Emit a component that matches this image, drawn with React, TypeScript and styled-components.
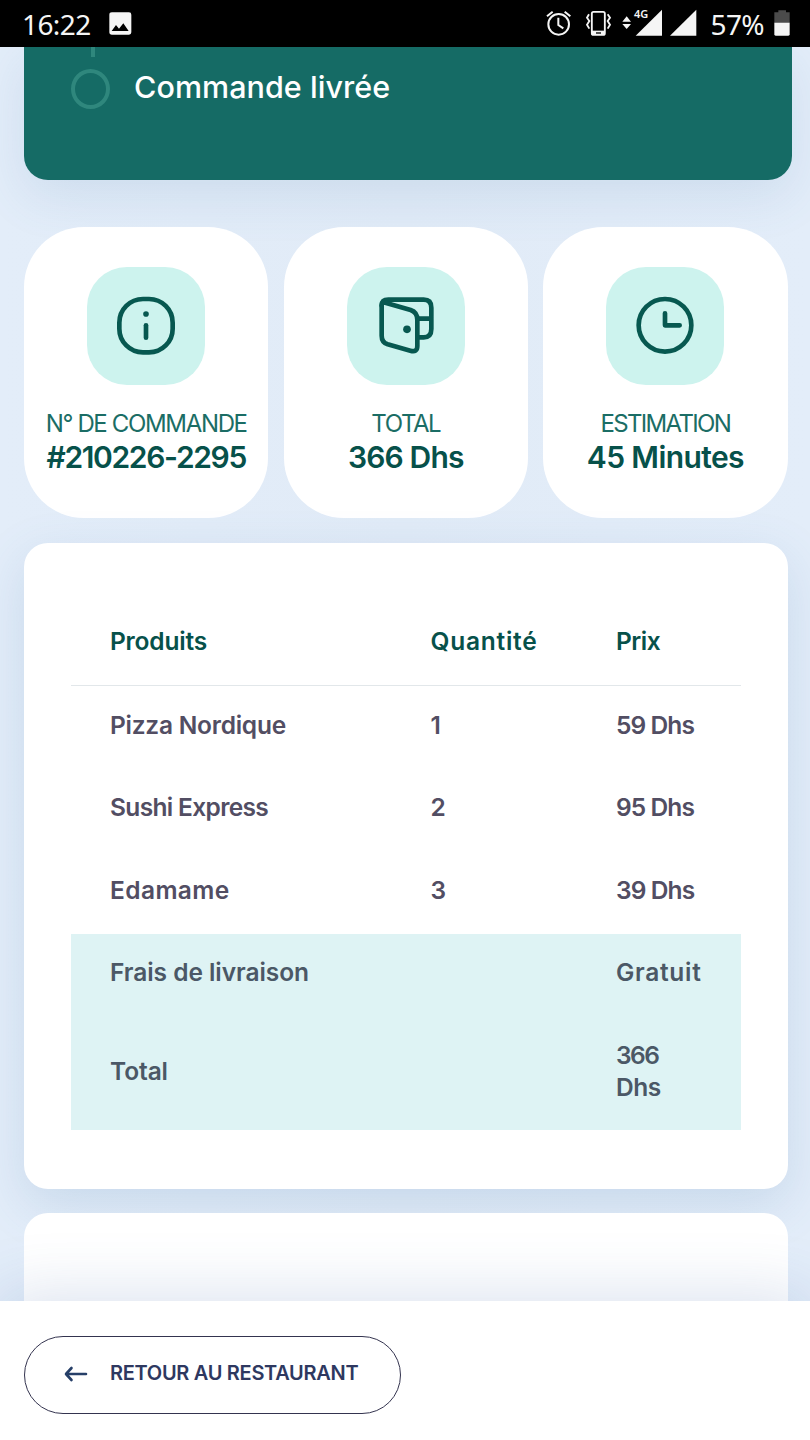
import React from 'react';
import styled, { createGlobalStyle } from 'styled-components';

const GlobalStyle = createGlobalStyle`
  *, *::before, *::after { box-sizing: border-box; }
  html, body { margin: 0; padding: 0; }
  body {
    width: 810px;
    height: 1440px;
    overflow: hidden;
    background: #e1ebf7;
    font-family: Inter, "Liberation Sans", sans-serif;
  }
`;

const Screen = styled.div`
  display: flex;
  flex-direction: column;
  width: 810px;
  height: 1440px;
  overflow: hidden;
  background: linear-gradient(90deg, #e3edf9 0%, #e1ebf7 50%, #e3edf9 100%);
`;

const StatusBar = styled.header`
  display: flex;
  flex: none;
  align-items: flex-start;
  height: 47px;
  padding: 9.33px 20px 0 22px;
  background: #000;
  color: #f5f5f5;
  font-family: "Noto Sans", sans-serif;
  position: relative;
  z-index: 2;
`;

const StatusText = styled.span<{ $spacing: number; $width: number; $gap?: number }>`
  width: ${(p) => p.$width}px;
  margin-left: ${(p) => p.$gap ?? 0}px;
  font-size: 28px;
  letter-spacing: ${(p) => p.$spacing}px;
  line-height: 30px;
  white-space: nowrap;
`;

const Glyph = styled.svg<{ $gap?: number }>`
  flex: none;
  display: block;
  height: 27.33px;
  margin-left: ${(p) => p.$gap ?? 0}px;
`;

const Spacer = styled.div`
  flex: 1;
`;

const Content = styled.main`
  display: flex;
  flex: 1;
  flex-direction: column;
  min-height: 0;
  padding: 0 18px 0 24px;
`;

const ProgressCard = styled.section`
  display: flex;
  flex: none;
  align-items: flex-start;
  height: 133px;
  padding-left: 47px;
  gap: 24px;
  border-radius: 0 0 24px 24px;
  background: #156b65;
  box-shadow: 0 16px 50px rgba(80, 125, 180, 0.14);
`;

const Track = styled.div`
  display: flex;
  flex-direction: column;
  align-items: center;
  width: 39px;
`;

const TrackLine = styled.i`
  width: 4px;
  height: 10px;
  margin: 0 0 12px 4px;
  background: #2f877d;
`;

const TrackDot = styled.i`
  width: 39px;
  height: 40px;
  border: 4px solid #2f877d;
  border-radius: 50%;
`;

const Text = styled.span<{ $spacing: number }>`
  letter-spacing: ${(p) => p.$spacing}px;
  white-space: nowrap;
`;

const StepLabel = styled.div`
  padding-top: 20px;
  color: #fff;
  font-size: 30.5px;
  font-weight: 550;
  line-height: 40px;
`;

const Stats = styled.section`
  display: grid;
  flex: none;
  grid-template-columns: repeat(3, 244.4px);
  column-gap: 15.2px;
  margin-top: 47px;
`;

const StatCard = styled.article`
  display: flex;
  flex-direction: column;
  align-items: center;
  height: 291px;
  padding-top: 40px;
  border-radius: 60px;
  background: #fff;
`;

const IconTile = styled.div`
  width: 118px;
  height: 118px;
  border-radius: 40px;
  background: #cdf3ee;

  svg {
    display: block;
    width: 100%;
    height: 100%;
    fill: none;
    stroke: #075850;
    stroke-width: 14;
    stroke-linecap: round;
    stroke-linejoin: round;
  }
`;

const StatLabel = styled.div`
  margin-top: 23px;
  color: #1b6d65;
  font-size: 24px;
  font-weight: 400;
  line-height: 32px;
`;

const StatValue = styled.div`
  margin-top: -1px;
  color: #07514a;
  font-size: 30px;
  font-weight: 600;
  line-height: 36px;
`;

const OrderCard = styled.section`
  flex: none;
  width: 764px;
  height: 646.5px;
  margin-top: 24.5px;
  padding: 53.5px 47px 0;
  border-radius: 24px;
  background: #fff;
  box-shadow: 0 16px 50px rgba(80, 125, 180, 0.18);
`;

const Row = styled.div<{ $height?: number }>`
  display: grid;
  grid-template-columns: 320.5px 185.5px 90px;
  align-items: center;
  height: ${(p) => p.$height ?? 82.5}px;
  padding: 0 0 5px 39px;
  color: #524e63;
  font-size: 24.5px;
  font-weight: 600;
  line-height: 32px;
`;

const HeadRow = styled(Row)`
  height: 90px;
  padding-bottom: 0;
  border-bottom: 1.5px solid #e2e7ea;
  color: #07514a;
`;

const Summary = styled.div`
  height: 196.5px;
  background: #def3f4;

  ${Row} {
    color: #4b5866;
  }
`;

const NextCard = styled.section`
  flex: none;
  width: 764px;
  height: 200px;
  margin-top: 24px;
  border-radius: 24px;
  background: #fff;
`;

const Footer = styled.footer`
  display: flex;
  flex: none;
  align-items: flex-start;
  height: 139.5px;
  padding: 35px 24px 0;
  background: #fff;
  box-shadow: 0 -6px 64px rgba(50, 90, 160, 0.18);
  position: relative;
  z-index: 1;
`;

const BackButton = styled.button`
  display: flex;
  align-items: center;
  width: 376.5px;
  height: 78px;
  padding: 0 0 4px 39px;
  border: 1.5px solid #34344f;
  border-radius: 40px;
  background: #fff;
  color: #2e3860;
  font: 600 20px/28px Inter, "Liberation Sans", sans-serif;

  svg {
    flex: none;
    margin: 3px 22px 0 0;
  }
`;

const InfoIcon = () => (
  <svg viewBox="261 170 354 354">
    <rect x="358" y="266" width="160" height="160" rx="71" />
    <path d="M438 345V382" />
    <circle cx="438" cy="311" r="8.5" fill="#075850" stroke="none" />
  </svg>
);

const WalletIcon = () => (
  <svg viewBox="230 170 354 354">
    <path d="M334 286Q334 268 354 268H460Q483 268 483 292V356Q483 381 460 381H445M443 325H483" />
    <path d="M334 284V376Q334 396 352 402L420 421Q441 427 441 407V328Q441 306 421 299L345 277Q334 274 334 286" />
    <circle cx="410" cy="357" r="11.5" fill="#075850" stroke="none" />
  </svg>
);

const ClockIcon = () => (
  <svg viewBox="230 170 354 354">
    <circle cx="407" cy="345" r="79" />
    <path d="M407 309V345H451" />
  </svg>
);

const PictureIcon = () => (
  <Glyph viewBox="0 0 70 82" width={23.33} $gap={0}>
    <path
      fill="#f5f5f5"
      fillRule="evenodd"
      d="M9 10H60Q67 10 67 17V70Q67 77 60 77H9Q1 77 1 70V17Q1 10 9 10ZM8 66H59L43 43L30 59L21 48Z"
    />
  </Glyph>
);

const AlarmIcon = () => (
  <Glyph viewBox="45 28 78 82" width={26}>
    <g fill="none" stroke="#f5f5f5" strokeWidth="6">
      <circle cx="83" cy="74" r="31" />
      <path d="M82 54V76L97 86" />
      <path d="M48 50L65 36M118 50L101 36" />
    </g>
  </Glyph>
);

const VibrateIcon = () => (
  <Glyph viewBox="162 28 82 82" width={27.33} $gap={13}>
    <g fill="none" stroke="#f5f5f5" strokeWidth="5.5">
      <rect x="182.5" y="36.500" width="39" height="69" rx="5" />
      <path d="M174 44L168 54L175 64L168 75L175 87M230 44L237 54L230 64L237 75L230 87" />
    </g>
    <path fill="#f5f5f5" d="M182 93H222V106H182Z" />
    <path stroke="#000" strokeWidth="4" d="M195 100H210" />
  </Glyph>
);

const MobileDataIcon = () => (
  <Glyph viewBox="274 22 124 88" width={41.33} height={29.33} $gap={10}>
    <path fill="#f5f5f5" d="M275 66L288 50L301 66ZM275 73H301L288 88Z" />
    <path fill="#f5f5f5" d="M394 30V108H315Z" />
    <text
      x="310"
      y="55"
      fill="#f5f5f5"
      stroke="#000"
      strokeWidth="6"
      paintOrder="stroke"
      fontFamily="Noto Sans, sans-serif"
      fontSize="33"
      fontWeight="600"
    >
      4G
    </text>
  </Glyph>
);

const DataGlyphBox = styled.div`
  flex: none;
  margin-top: -2px;

  svg {
    height: 29.33px;
  }
`;

const SignalIcon = () => (
  <Glyph viewBox="418 28 80 82" width={26.67} $gap={6.5}>
    <path fill="#f5f5f5" d="M497 30V108H418Z" />
  </Glyph>
);

const BatteryIcon = () => (
  <Glyph viewBox="733 28 48 82" width={16}>
    <path fill="#4b4b4b" d="M734 38H746V32H769V38H780V70H734Z" />
    <path fill="#f5f5f5" d="M734 69H780V104Q780 108 776 108H738Q734 108 734 104Z" />
  </Glyph>
);

const stats = [
  { Icon: InfoIcon, label: 'N° DE COMMANDE', ls: -1.35, value: '#210226-2295', vs: -1.35 },
  { Icon: WalletIcon, label: 'TOTAL', ls: -1.4, value: '366 Dhs', vs: -0.85 },
  { Icon: ClockIcon, label: 'ESTIMATION', ls: -1.65, value: '45 Minutes', vs: -0.6 },
];

const products = [
  { name: 'Pizza Nordique', ns: -0.25, qty: '1', price: '59 Dhs' },
  { name: 'Sushi Express', ns: -0.65, qty: '2', price: '95 Dhs' },
  { name: 'Edamame', ns: 0.4, qty: '3', price: '39 Dhs' },
];

export default function App() {
  return (
    <Screen>
      <GlobalStyle />
      <StatusBar>
        <StatusText $spacing={-0.6} $width={87}>16:22</StatusText>
        <PictureIcon />
        <Spacer />
        <AlarmIcon />
        <VibrateIcon />
        <DataGlyphBox>
          <MobileDataIcon />
        </DataGlyphBox>
        <SignalIcon />
        <StatusText $spacing={-0.6} $width={63.5} $gap={14}>57%</StatusText>
        <BatteryIcon />
      </StatusBar>

      <Content>
        <ProgressCard>
          <Track>
            <TrackLine />
            <TrackDot />
          </Track>
          <StepLabel>
            <Text $spacing={0.05}>Commande livrée</Text>
          </StepLabel>
        </ProgressCard>

        <Stats>
          {stats.map(({ Icon, label, ls, value, vs }) => (
            <StatCard key={label}>
              <IconTile>
                <Icon />
              </IconTile>
              <StatLabel>
                <Text $spacing={ls}>{label}</Text>
              </StatLabel>
              <StatValue>
                <Text $spacing={vs}>{value}</Text>
              </StatValue>
            </StatCard>
          ))}
        </Stats>

        <OrderCard>
          <HeadRow>
            <Text $spacing={-0.2}>Produits</Text>
            <Text $spacing={0.75}>Quantité</Text>
            <Text $spacing={-0.5}>Prix</Text>
          </HeadRow>
          {products.map((p) => (
            <Row key={p.name}>
              <Text $spacing={p.ns}>{p.name}</Text>
              <span>{p.qty}</span>
              <Text $spacing={-0.9}>{p.price}</Text>
            </Row>
          ))}
          <Summary>
            <Row>
              <Text $spacing={-0.05}>Frais de livraison</Text>
              <span />
              <Text $spacing={0.7}>Gratuit</Text>
            </Row>
            <Row $height={114}>
              <Text $spacing={-0.1}>Total</Text>
              <span />
              <div>
                <Text $spacing={-1.5}>366</Text>
                <br />
                <Text $spacing={-0.5}>Dhs</Text>
              </div>
            </Row>
          </Summary>
        </OrderCard>

        <NextCard />
      </Content>

      <Footer>
        <BackButton type="button">
          <svg width="24" height="18" viewBox="0 0 24 18" fill="none" stroke="#263f68" strokeWidth="2.6" strokeLinecap="round" strokeLinejoin="round">
            <path d="M22 9H2.500M7.500 3L2 9L7.500 15" />
          </svg>
          <Text $spacing={-0.3}>RETOUR AU RESTAURANT</Text>
        </BackButton>
      </Footer>
    </Screen>
  );
}
